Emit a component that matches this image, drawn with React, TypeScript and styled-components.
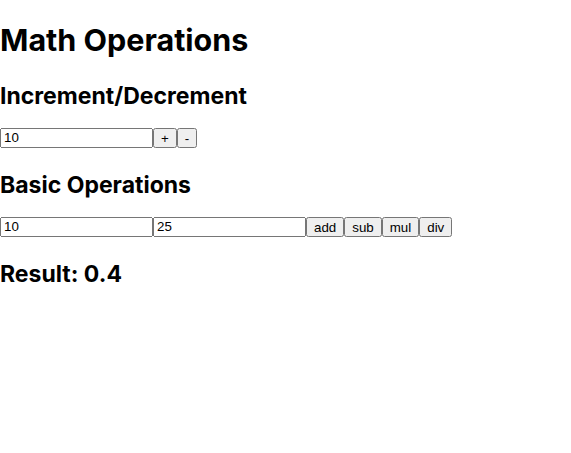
import React, { useState } from "react";
import styled, { createGlobalStyle } from "styled-components";

const GlobalStyle = createGlobalStyle`
  body {
    margin: 0;
    font-family: Inter, "Noto Sans", sans-serif;
    background: #ffffff;
    color: #000000;
  }
`;

const Title = styled.h1`
  font-size: 30.5px;
  line-height: 38px;
  font-weight: 700;
  margin: 21px 0 23.3px;
`;

const SectionTitle = styled.h2`
  font-size: 23px;
  line-height: 28px;
  font-weight: 700;
  margin: 23px 0 17.7px;
`;

const Row = styled.div`
  display: flex;
  align-items: flex-start;
`;

const NumberInput = styled.input`
  box-sizing: border-box;
  width: 153px;
  height: 20px;
  margin: 0;
  font-family: "Liberation Sans", Arial, sans-serif;
  font-size: 13.33px;
`;

const OpButton = styled.button`
  box-sizing: border-box;
  height: 20px;
  margin: 0;
  font-family: "Liberation Sans", Arial, sans-serif;
  font-size: 13.33px;
`;

const App: React.FC = () => {
  const [count, setCount] = useState(10);
  const [a, setA] = useState("10");
  const [b, setB] = useState("25");
  const [result, setResult] = useState<number>(0.4);

  const run = (op: string) => {
    const x = Number(a);
    const y = Number(b);
    if (op === "add") setResult(x + y);
    if (op === "sub") setResult(x - y);
    if (op === "mul") setResult(x * y);
    if (op === "div") setResult(x / y);
  };

  return (
    <>
      <GlobalStyle />
      <Title>Math Operations</Title>
      <SectionTitle>Increment/Decrement</SectionTitle>
      <Row>
        <NumberInput
          value={count}
          onChange={(e) => setCount(Number(e.target.value))}
        />
        <OpButton onClick={() => setCount(count + 1)}>+</OpButton>
        <OpButton onClick={() => setCount(count - 1)}>-</OpButton>
      </Row>
      <SectionTitle>Basic Operations</SectionTitle>
      <Row>
        <NumberInput value={a} onChange={(e) => setA(e.target.value)} />
        <NumberInput value={b} onChange={(e) => setB(e.target.value)} />
        <OpButton onClick={() => run("add")}>add</OpButton>
        <OpButton onClick={() => run("sub")}>sub</OpButton>
        <OpButton onClick={() => run("mul")}>mul</OpButton>
        <OpButton onClick={() => run("div")}>div</OpButton>
      </Row>
      <SectionTitle>Result: {result}</SectionTitle>
    </>
  );
};

export default App;
